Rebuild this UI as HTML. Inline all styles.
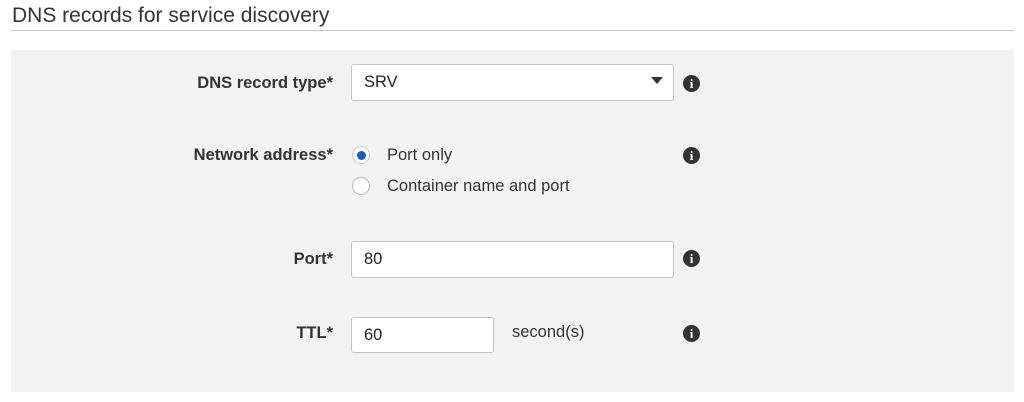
<!DOCTYPE html>
<html><head><style>
body{margin:0;width:1024px;height:402px;background:#fff;font-family:"Liberation Sans",Arial,sans-serif;position:relative;overflow:hidden;color:#333}
.t{position:absolute;left:12px;top:4px;font-size:21px;color:#333}
.hr{position:absolute;left:11px;top:30px;width:1003px;height:1px;background:#c9c9c9}
.panel{position:absolute;left:11px;top:50px;width:1003px;height:342px;background:#f2f2f2}
.lab{position:absolute;right:691px;font-weight:bold;font-size:16.5px;color:#333}
.box{position:absolute;left:351px;background:#fff;border:1px solid #c4c4c4;border-radius:3px;height:34px;box-sizing:border-box;font-size:16.5px;padding:8px 0 0 12px;color:#222}
.txt{position:absolute;font-size:16.5px;color:#333}
.info{position:absolute;width:17px;height:17px;border-radius:50%;background:#333;color:#fff;font:bold 13px "Liberation Serif",serif;text-align:center;line-height:17px}
.r{position:absolute;left:352px;width:18px;height:18px;border-radius:50%;background:#fff;border:1px solid #bbb;box-sizing:border-box}
</style></head><body>
<div class="t">DNS records for service discovery</div>
<div class="hr"></div>
<div class="panel"></div>
<div class="lab" style="top:74px">DNS record type*</div>
<div class="box" style="top:64px;width:323px;height:37px">SRV</div>
<div style="position:absolute;left:651px;top:77px;width:0;height:0;border-left:6px solid transparent;border-right:6px solid transparent;border-top:7px solid #333"></div>
<div class="info" style="left:683px;top:75px">i</div>
<div class="lab" style="top:146px">Network address*</div>
<div class="r" style="top:146px;border-color:#ccc"><div style="position:absolute;left:3.5px;top:3.5px;width:9px;height:9px;border-radius:50%;background:#1a5fb4"></div></div>
<div class="txt" style="left:387px;top:146px">Port only</div>
<div class="r" style="top:177px"></div>
<div class="txt" style="left:387px;top:177px">Container name and port</div>
<div class="info" style="left:683px;top:147px">i</div>
<div class="lab" style="top:250px">Port*</div>
<div class="box" style="top:241px;width:323px;height:37px">80</div>
<div class="info" style="left:683px;top:250px">i</div>
<div class="lab" style="top:324px">TTL*</div>
<div class="box" style="top:317px;width:143px;height:36px">60</div>
<div class="txt" style="left:512px;top:323px">second(s)</div>
<div class="info" style="left:683px;top:325px">i</div>
</body></html>
